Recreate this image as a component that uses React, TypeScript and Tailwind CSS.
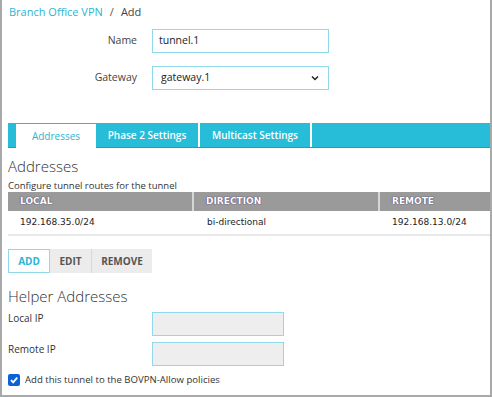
import React from "react";

export default function App() {
  const font = { fontFamily: '"Open Sans", "Noto Sans", sans-serif' };
  const verdana = { fontFamily: '"DejaVu Sans", Verdana, sans-serif' };
  return (
    <div className="w-[492px] h-[397px] bg-white overflow-hidden">
      <div
        className="w-[492px] h-[397px] border-l-2 border-r-2 border-b-2 border-[#a9a9a9] text-[#333] box-border"
        style={font}
      >
        {/* breadcrumb */}
        <div className="pl-[7px] pt-[4px] h-[20px] text-[11px] leading-[16px]">
          <span className="text-[#2bb5d3]">Branch Office VPN</span>
          <span className="text-[#555] ml-[7px]">/</span>
          <span className="text-[#444] ml-[7px]">Add</span>
        </div>

        {/* Name */}
        <div className="flex items-center mt-[9px] h-[24px]">
          <div className="w-[135px] text-right text-[10.5px] text-[#444]">Name</div>
          <div className="ml-[15px] w-[177px] h-[24px] border border-[#8fd9ea] flex items-center pl-[6px] text-[10.5px] text-[#222]">
            tunnel.1
          </div>
        </div>

        {/* Gateway */}
        <div className="flex items-center mt-[13px] h-[24px]">
          <div className="w-[135px] text-right text-[10.5px] text-[#444]">Gateway</div>
          <div className="ml-[15px] w-[177px] h-[24px] border border-[#8fd9ea] flex items-center justify-between pl-[8px] pr-[9px] text-[10.5px] text-[#222]">
            <span>gateway.1</span>
            <svg width="8" height="6" viewBox="0 0 8 6">
              <path d="M1 1.5 L4 4.5 L7 1.5" stroke="#222" strokeWidth="1.5" fill="none" />
            </svg>
          </div>
        </div>

        {/* Tabs */}
        <div className="mt-[33px] ml-[6px] h-[25px] bg-[#27bcd7] border-b border-[#16a3be] flex pl-[8px] text-[10px]">
          <div className="w-[80px] h-[25px] bg-white border-t border-[#27bcd7] flex items-center justify-center text-[#2bb5d3]">
            Addresses
          </div>
          <div className="w-[104px] flex items-center justify-center text-white font-semibold border-r-2 border-white">
            Phase 2 Settings
          </div>
          <div className="w-[112px] flex items-center justify-center text-white font-semibold border-r-2 border-white">
            Multicast Settings
          </div>
        </div>

        {/* Addresses heading */}
        <div className="ml-[6px] mt-[9px] text-[15px] leading-[18px] font-light text-[#333]">Addresses</div>
        <div className="ml-[6px] mt-[4px] text-[9.5px] leading-[13px] text-[#333]">Configure tunnel routes for the tunnel</div>

        {/* Table */}
        <div className="ml-[6px] w-[482px]">
          <div className="flex h-[19px] bg-[#9a9a9a] text-[9px] font-bold text-white" style={{ ...verdana, textShadow: "0 0 1px #4b3a7a, 0 0 1px #4b3a7a" }}>
            <div className="w-[186px] flex items-center pl-[12px] border-r-2 border-[#d6d6d6]">LOCAL</div>
            <div className="w-[186px] flex items-center pl-[12px] border-r-2 border-[#d6d6d6]">DIRECTION</div>
            <div className="flex-1 flex items-center pl-[12px]">REMOTE</div>
          </div>
          <div className="flex h-[25px] border-b-2 border-[#e8e8e8] text-[9px] text-[#222]" style={verdana}>
            <div className="w-[186px] flex items-center pl-[12px]">192.168.35.0/24</div>
            <div className="w-[186px] flex items-center pl-[13px]">bi-directional</div>
            <div className="flex-1 flex items-center pl-[12px]">192.168.13.0/24</div>
          </div>
        </div>

        {/* Buttons */}
        <div className="ml-[6px] mt-[13px] flex h-[24px] text-[10px] font-bold">
          <div className="w-[42px] border border-[#8fd9ea] bg-white text-[#2bb5d3] flex items-center justify-center">ADD</div>
          <div className="w-[42px] bg-[#ececec] border-r border-[#d8d8d8] text-[#555] flex items-center justify-center">EDIT</div>
          <div className="w-[60px] bg-[#ececec] text-[#555] flex items-center justify-center">REMOVE</div>
        </div>

        {/* Helper Addresses */}
        <div className="ml-[6px] mt-[14px] text-[15px] leading-[18px] font-light text-[#333]">Helper Addresses</div>

        <div className="flex mt-[7px] h-[24px]">
          <div className="w-[150px] pl-[6px] text-[10px] leading-[13px] text-[#333]">Local IP</div>
          <div className="w-[132px] h-[24px] bg-[#eeeeee] border border-[#8fd9ea]"></div>
        </div>
        <div className="flex mt-[6px] h-[24px]">
          <div className="w-[150px] pl-[6px] text-[10px] leading-[13px] pt-[1px] text-[#333]">Remote IP</div>
          <div className="w-[132px] h-[24px] bg-[#eeeeee] border border-[#8fd9ea]"></div>
        </div>

        <div className="ml-[6px] mt-[7px] flex items-center gap-[5px] text-[9.6px] text-[#333]">
          <div className="w-[12px] h-[12px] rounded-[2px] bg-[#0b63d8] flex items-center justify-center">
            <svg width="10" height="10" viewBox="0 0 10 10">
              <path d="M2 5.2 L4.2 7.4 L8.2 2.6" stroke="white" strokeWidth="1.8" fill="none" />
            </svg>
          </div>
          <span>Add this tunnel to the BOVPN-Allow policies</span>
        </div>
      </div>
    </div>
  );
}
